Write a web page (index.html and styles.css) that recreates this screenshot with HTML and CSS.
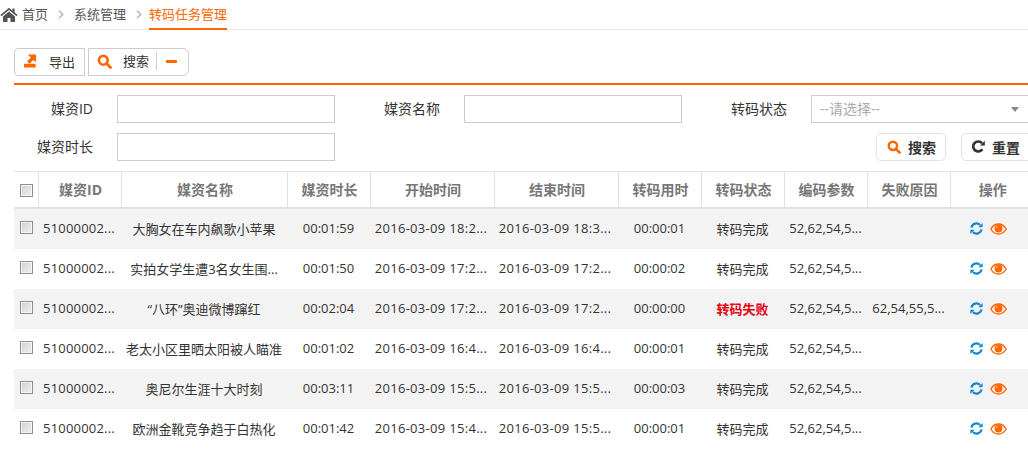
FILE: index.html
```html
<!DOCTYPE html>
<html lang="zh-CN">
<head>
  <meta charset="UTF-8">
  <meta name="viewport" content="width=device-width, initial-scale=1.0">
  <link rel="stylesheet" href="styles.css">
</head>
<body>
  <svg class="sprites" width="0" height="0">
    <symbol id="i-search" viewBox="0 0 16 16">
      <circle cx="6.7" cy="6.7" r="4.7" fill="none" stroke="currentColor" stroke-width="2.8"/>
      <path d="M10.2 10.2l4.2 4.2" stroke="currentColor" stroke-width="3" stroke-linecap="round"/>
    </symbol>
    <symbol id="i-sync" viewBox="0 0 14 14">
      <path d="M1.6 6A5.4 5.4 0 0 1 10.8 3.2" fill="none" stroke="currentColor" stroke-width="2.400"/>
      <path d="M9 5.6h4.6V1z" fill="currentColor"/>
      <path d="M12.4 8A5.4 5.4 0 0 1 3.2 10.8" fill="none" stroke="currentColor" stroke-width="2.400"/>
      <path d="M5 8.4H.4V13z" fill="currentColor"/>
    </symbol>
    <symbol id="i-eye" viewBox="0 0 17 12">
      <path d="M.8 6C2.6 2.8 5.3 1 8.500 1s5.900 1.800 7.700 5c-1.800 3.200-4.500 5-7.700 5S2.600 9.200.8 6z" fill="none" stroke="currentColor" stroke-width="1.300"/>
      <circle cx="8.500" cy="5.500" r="3.900" fill="currentColor"/>
      <circle cx="7" cy="4" r="1" fill="#ffb27a"/>
    </symbol>
  </svg>

  <nav class="crumbs">
    <svg class="home" width="18" height="15" viewBox="0 0 18 15"><path d="M9 .8L.4 8l1 1.200L9 3l7.600 6.200 1-1.200-3-2.500V1.500h-2.200v2.200zM3 9.500V15h4.500v-4h3v4H15V9.500L9 4.600z" fill="#555"/></svg>
    <a class="crumb">首页</a>
    <svg class="sep" width="6" height="9" viewBox="0 0 6 9"><path d="M1 .8L4.800 4.500 1 8.200" fill="none" stroke="#b5b5b5" stroke-width="1.400"/></svg>
    <a class="crumb">系统管理</a>
    <svg class="sep" width="6" height="9" viewBox="0 0 6 9"><path d="M1 .8L4.800 4.500 1 8.200" fill="none" stroke="#b5b5b5" stroke-width="1.400"/></svg>
    <a class="crumb active">转码任务管理</a>
  </nav>

  <main class="content">
    <div class="toolbar">
      <button class="tool tool-export">
        <svg width="13" height="14" viewBox="0 0 14 14"><path d="M0 10h12.500v4H0z" fill="#ff6600"/><path d="M4 0h9v8.500l-2.800-2.700-4.300 4.200-2.600-2.600 4.200-4.200z" fill="#ff6600"/></svg>
        导出
      </button>
      <button class="tool tool-search">
        <svg class="ico-search" width="15" height="15"><use href="#i-search"/></svg>
        <span class="tool-label">搜索</span>
        <span class="minus"></span>
      </button>
    </div>

    <form class="filters">
      <label>媒资ID</label>
      <input class="field" type="text">
      <label>媒资名称</label>
      <input class="field" type="text">
      <label>转码状态</label>
      <div class="field select">--请选择--<span class="caret"></span></div>
      <label>媒资时长</label>
      <input class="field" type="text">
      <div class="filter-actions">
        <button type="button" class="act act-search">
          <svg class="ico-search" width="14" height="14"><use href="#i-search"/></svg>
          搜索
        </button>
        <button type="button" class="act act-reset">
          <svg width="13" height="13" viewBox="0 0 13 13"><path d="M10.400 9.200A5 5 0 1 1 10 3.200" fill="none" stroke="#333" stroke-width="2.600"/><path d="M8 5.500h4.800V.7z" fill="#333"/></svg>
          重置
        </button>
      </div>
    </form>

    <table class="grid">
      <colgroup>
        <col class="c-check"><col class="c-id"><col class="c-name"><col class="c-83"><col class="c-time"><col class="c-time">
        <col class="c-83"><col class="c-83"><col class="c-83"><col class="c-83"><col class="c-83">
      </colgroup>
      <thead>
        <tr>
          <th><input class="check" type="checkbox"></th>
          <th>媒资ID</th><th>媒资名称</th><th>媒资时长</th><th>开始时间</th><th>结束时间</th>
          <th>转码用时</th><th>转码状态</th><th>编码参数</th><th>失败原因</th><th>操作</th>
        </tr>
      </thead>
      <tbody>
        <tr>
          <td><input class="check" type="checkbox"></td>
          <td class="left">51000002...</td><td>大胸女在车内飙歌小苹果</td><td>00:01:59</td>
          <td class="date">2016-03-09 18:2...</td><td class="date">2016-03-09 18:3...</td><td>00:00:01</td><td>转码完成</td>
          <td>52,62,54,5...</td><td></td>
          <td class="ops"><svg class="sync"><use href="#i-sync"/></svg><svg class="eye"><use href="#i-eye"/></svg></td>
        </tr>
        <tr>
          <td><input class="check" type="checkbox"></td>
          <td class="left">51000002...</td><td>实拍女学生遭3名女生围...</td><td>00:01:50</td>
          <td class="date">2016-03-09 17:2...</td><td class="date">2016-03-09 17:2...</td><td>00:00:02</td><td>转码完成</td>
          <td>52,62,54,5...</td><td></td>
          <td class="ops"><svg class="sync"><use href="#i-sync"/></svg><svg class="eye"><use href="#i-eye"/></svg></td>
        </tr>
        <tr>
          <td><input class="check" type="checkbox"></td>
          <td class="left">51000002...</td><td>“八环”奥迪微博蹿红</td><td>00:02:04</td>
          <td class="date">2016-03-09 17:2...</td><td class="date">2016-03-09 17:2...</td><td>00:00:00</td><td class="failed">转码失败</td>
          <td>52,62,54,5...</td><td>62,54,55,5...</td>
          <td class="ops"><svg class="sync"><use href="#i-sync"/></svg><svg class="eye"><use href="#i-eye"/></svg></td>
        </tr>
        <tr>
          <td><input class="check" type="checkbox"></td>
          <td class="left">51000002...</td><td>老太小区里晒太阳被人瞄准</td><td>00:01:02</td>
          <td class="date">2016-03-09 16:4...</td><td class="date">2016-03-09 16:4...</td><td>00:00:01</td><td>转码完成</td>
          <td>52,62,54,5...</td><td></td>
          <td class="ops"><svg class="sync"><use href="#i-sync"/></svg><svg class="eye"><use href="#i-eye"/></svg></td>
        </tr>
        <tr>
          <td><input class="check" type="checkbox"></td>
          <td class="left">51000002...</td><td>奥尼尔生涯十大时刻</td><td>00:03:11</td>
          <td class="date">2016-03-09 15:5...</td><td class="date">2016-03-09 15:5...</td><td>00:00:03</td><td>转码完成</td>
          <td>52,62,54,5...</td><td></td>
          <td class="ops"><svg class="sync"><use href="#i-sync"/></svg><svg class="eye"><use href="#i-eye"/></svg></td>
        </tr>
        <tr>
          <td><input class="check" type="checkbox"></td>
          <td class="left">51000002...</td><td>欧洲金靴竞争趋于白热化</td><td>00:01:42</td>
          <td class="date">2016-03-09 15:4...</td><td class="date">2016-03-09 15:5...</td><td>00:00:01</td><td>转码完成</td>
          <td>52,62,54,5...</td><td></td>
          <td class="ops"><svg class="sync"><use href="#i-sync"/></svg><svg class="eye"><use href="#i-eye"/></svg></td>
        </tr>
      </tbody>
    </table>
  </main>
</body>
</html>
```

FILE: styles.css
```css
html, body {
  margin: 0;
  height: 450px;
  overflow: hidden;
  background-color: #fff;
}

body {
  font-family: "Open Sans", "Noto Sans CJK SC", sans-serif;
  font-size: 13px;
  color: #333;
}

.sprites {
  display: block;
  height: 0;
}

.crumbs {
  display: flex;
  align-items: center;
  height: 29px;
  border-bottom: 1px solid #e5e5e5;
  color: #555;
}

.home {
  flex: none;
  margin-right: 4px;
}

.sep {
  margin: 0 10px;
}

.crumb {
  display: flex;
  align-items: center;
  height: 29px;
  box-sizing: border-box;
  padding-bottom: 2px;
}

.crumb.active {
  color: #ff6600;
  border-bottom: 2px solid #ff6600;
  margin-left: -3px;
  margin-bottom: -1px;
  height: 30px;
}

.content {
  padding: 18px 0 0 14px;
  width: 1019px;
}

.toolbar {
  display: flex;
  gap: 3px;
  height: 35px;
  width: 1014px;
  border-bottom: 2px solid #ff6600;
}

button {
  font: inherit;
  color: #333;
  background: #fff;
  cursor: pointer;
  padding: 0;
}

.tool {
  display: flex;
  align-items: center;
  height: 28px;
  padding-bottom: 2px;
  border: 1px solid #ccc;
}

.tool-export {
  width: 71px;
  border-radius: 4px 0 0 4px;
  padding-left: 9px;
  gap: 12px;
}

.tool-search {
  width: 101px;
  border-radius: 0 6px 6px 0;
  padding-left: 8px;
}

.ico-search {
  color: #ff6600;
}

.tool-label {
  margin-left: 11px;
  padding-right: 7px;
  border-right: 1px solid #ccc;
  line-height: 18px;
}

.minus {
  width: 11px;
  height: 3px;
  margin-left: 9px;
  background: #ff6600;
  border-radius: 1px;
}

.filters {
  display: grid;
  grid-template-columns: 103px 218px 129px 218px 129px 222px;
  grid-auto-rows: 28px;
  row-gap: 10px;
  margin-top: 10px;
  align-items: center;
  font-size: 14px;
}

.filters label {
  text-align: right;
  padding-right: 24px;
  padding-bottom: 2px;
}

.field {
  box-sizing: border-box;
  height: 28px;
  width: 100%;
  margin: 0;
  border: 1px solid #ccc;
  background: #fff;
}

.select {
  position: relative;
  display: flex;
  align-items: center;
  padding-left: 8px;
  padding-bottom: 2px;
  color: #aaa;
}

.caret {
  position: absolute;
  left: 199px;
  top: 11px;
  border: 4px solid transparent;
  border-top: 5px solid #888;
  border-bottom: 0;
}

.filter-actions {
  grid-column: 3 / 7;
  display: flex;
  justify-content: flex-end;
  gap: 15px;
}

.act {
  display: flex;
  align-items: center;
  gap: 7px;
  height: 28px;
  width: 70px;
  border: 1px solid #e2e2e2;
  border-radius: 5px;
  padding-left: 10px;
  padding-bottom: 1px;
  font-weight: bold;
}

.act-reset {
  width: 72px;
}

.grid {
  table-layout: fixed;
  width: 1019px;
  margin-top: 10px;
  border-collapse: collapse;
  border-top: 1px solid #e2e2e2;
}

.c-check { width: 24px; }
.c-id { width: 83px; }
.c-name { width: 166px; }
.c-83 { width: 83px; }
.c-time { width: 124px; }

th {
  height: 33px;
  padding: 0 0 2px 2px;
  font-size: 14px;
  color: #777;
  font-weight: bold;
  border-left: 1px solid #e2e2e2;
  border-bottom: 2px solid #e2e2e2;
}

th:first-child {
  border-left: 0;
  text-align: left;
  padding: 2px 0 0 6px;
}

td {
  height: 38px;
  padding: 0 0 2px;
  text-align: center;
  white-space: nowrap;
  overflow: hidden;
}

td:first-child {
  text-align: left;
  padding-left: 6px;
}

td.left {
  text-align: left;
  padding-left: 5px;
  letter-spacing: .2px;
}

td.date {
  letter-spacing: .3px;
  padding-right: 2px;
}

tbody tr:nth-child(odd) {
  background: #f3f3f3;
}

.failed {
  color: #e60012;
  font-weight: bold;
}

.check {
  appearance: none;
  display: block;
  box-sizing: border-box;
  width: 13px;
  height: 13px;
  margin: 0 0 2px;
  border: 1px solid #8e8e8e;
  outline: 1px solid #f4f4f4;
  outline-offset: -2px;
  background: linear-gradient(135deg, #cfcfcf, #f2f2f2);
}

th .check {
  margin: 0;
}

td.ops {
  text-align: left;
  padding-left: 20px;
}

.ops svg {
  vertical-align: middle;
  margin-bottom: 2px;
}

.sync {
  width: 13px;
  height: 13px;
  color: #0f88d0;
  margin-right: 7px;
}

.eye {
  width: 17px;
  height: 12px;
  color: #ff6600;
}
```
